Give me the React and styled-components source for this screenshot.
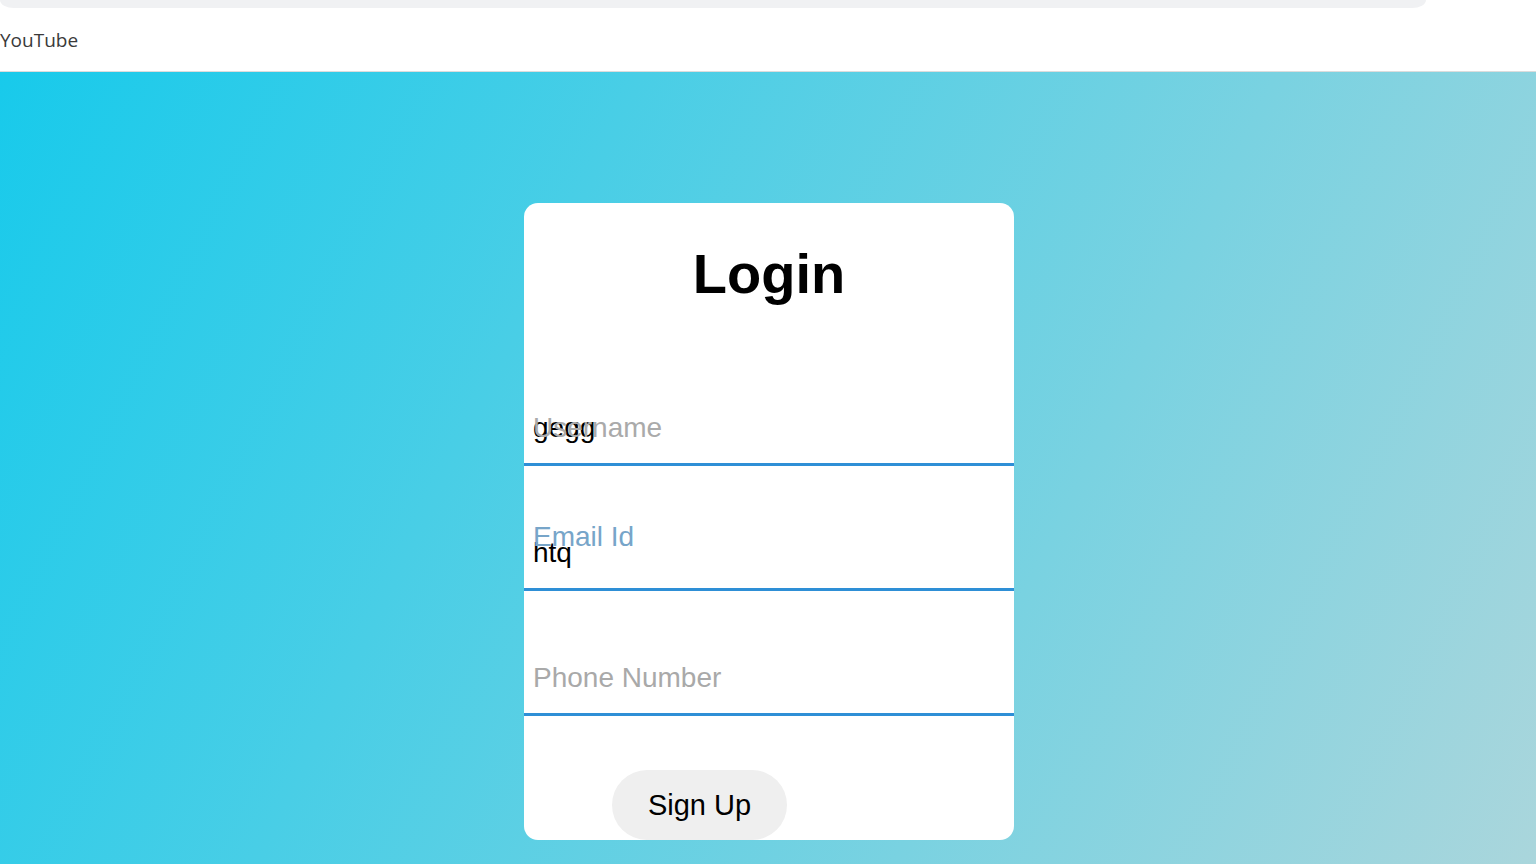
import styled, { createGlobalStyle } from 'styled-components';

//STYLE
const Global = createGlobalStyle`
  html, body {
    margin: 0;
    padding: 0;
    background: #fff;
  }
  body {
    font-family: "Liberation Sans", Arial, sans-serif;
    overflow: hidden;
  }
`;

const Header = styled.header`
  height: 71px;
  background: #fff;
  border-bottom: 1px solid #dcdcdc;
`;

const SearchStrip = styled.div`
  width: 1426px;
  height: 8px;
  background: #f0f1f3;
  border-radius: 0 0 14px 14px / 0 0 8px 8px;
`;

const Brand = styled.div`
  font-family: "Open Sans", sans-serif;
  font-size: 19px;
  line-height: 28px;
  color: #3a3a3a;
  margin-top: 18px;
`;

const Stage = styled.main`
  height: 792px;
  background: linear-gradient(116deg, #18caeb 0%, #aad6dc 100%);
  display: flex;
  justify-content: center;
  padding: 131px 0 0 2px;
  box-sizing: border-box;
`;

const Card = styled.form`
  width: 490px;
  height: 637px;
  background: #fff;
  border-radius: 14px;
  overflow: hidden;
  display: flex;
  flex-direction: column;
`;

const Title = styled.h1`
  margin: 38px 0 35px;
  font-size: 56px;
  font-weight: 700;
  text-align: center;
  color: #000;
`;

const Field = styled.div`
  position: relative;
  height: 125px;
  box-sizing: border-box;
  padding-bottom: 19px;
  border-bottom: 3px solid #2e8fd6;
  display: flex;
  flex-direction: column;
  justify-content: flex-end;
`;

const Input = styled.input`
  height: 32px;
  border: none;
  outline: none;
  background: transparent;
  padding: 0 0 0 9px;
  font-family: "Liberation Sans", Arial, sans-serif;
  font-size: 28px;
  line-height: 32px;
  color: #000;
  &::placeholder {
    color: #a9a9a9;
  }
`;

const Label = styled.label`
  position: absolute;
  left: 9px;
  bottom: ${p => (p.$raised ? 35 : 19)}px;
  font-size: 28px;
  line-height: 32px;
  color: ${p => (p.$raised ? '#77a5c9' : '#aaaaaa')};
  pointer-events: none;
`;

const Button = styled.button`
  margin: 54px 0 0 88px;
  width: 175px;
  height: 70px;
  border: none;
  border-radius: 35px;
  background: #efefef;
  font-family: "Liberation Sans", Arial, sans-serif;
  font-size: 29px;
  color: #000;
  cursor: pointer;
`;

//MARKUP
export default function App() {
  return (
    <>
      <Global />
      <Header>
        <SearchStrip />
        <Brand>YouTube</Brand>
      </Header>
      <Stage>
        <Card onSubmit={e => e.preventDefault()}>
          <Title>Login</Title>
          <Field>
            <Input defaultValue="gegg" />
            <Label>Username</Label>
          </Field>
          <Field>
            <Input defaultValue="htq" />
            <Label $raised>Email Id</Label>
          </Field>
          <Field>
            <Input placeholder="Phone Number" />
          </Field>
          <Button type="submit">Sign Up</Button>
        </Card>
      </Stage>
    </>
  );
}
